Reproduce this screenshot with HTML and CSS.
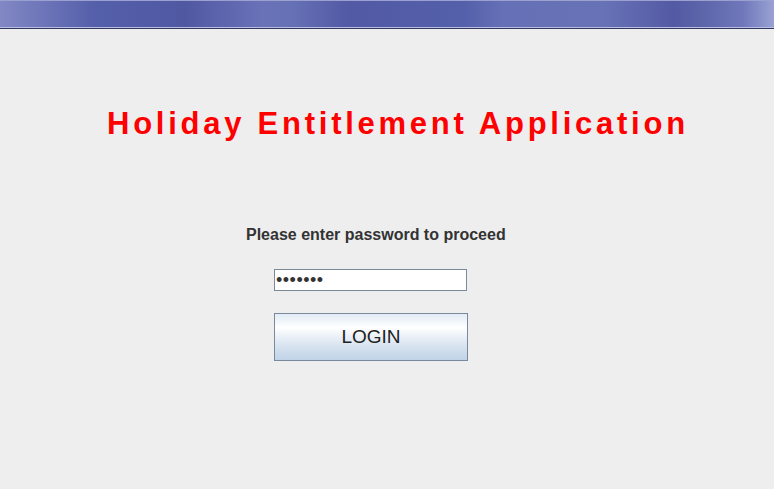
FILE: index.html
```html
<!DOCTYPE html>
<html>
<head>
<meta charset="utf-8">
<link rel="stylesheet" href="styles.css">
</head>
<body>
<div class="titlebar"></div>
<main class="content">
  <h1 class="title">Holiday Entitlement Application</h1>
  <p class="prompt">Please enter password to proceed</p>
  <div class="field"><input class="password" type="password" value="1234567"></div>
  <div class="actions"><button class="login">LOGIN</button></div>
</main>
</body>
</html>
```
FILE: styles.css
```css
html, body {
  margin: 0;
  padding: 0;
  background: #eeeeee;
  font-family: "Liberation Sans", Arial, sans-serif;
  width: 774px;
  height: 489px;
  overflow: hidden;
}
.titlebar {
  height: 26px;
  border-top: 1px solid #9aa0d0;
  border-bottom: 1px solid #b8bde6;
  box-shadow: 0 1px 0 #33385e;
  background: linear-gradient(90deg, #8288c4 0%, #6c74b8 6%, #5560aa 12%, #5058a2 24%, #5a63ab 28%, #6a73b8 34%, #6670b4 38%, #5259a5 45%, #5460aa 60%, #6670b6 65%, #6872b6 78%, #535aa4 87%, #5a62a8 90%, #7078bb 96%, #9aa2d4 100%);
}
.content {
  display: flex;
  flex-direction: column;
  padding-top: 78px;
}
.title {
  margin: 0 0 0 107px;
  font-size: 31px;
  font-weight: bold;
  color: #ff0000;
  letter-spacing: 3.75px;
  line-height: 36px;
  white-space: nowrap;
}
.prompt {
  margin: 83px 0 0 246px;
  font-size: 16px;
  font-weight: bold;
  color: #333333;
  line-height: 20px;
}
.field {
  margin: 24px 0 0 274px;
}
.password {
  box-sizing: border-box;
  width: 193px;
  height: 22px;
  border: 1px solid #7a8a99;
  background: #ffffff;
  padding: 0 1px;
  margin: 0;
  font-family: "Liberation Sans", Arial, sans-serif;
  font-size: 18px;
  color: #333333;
  letter-spacing: 0.5px;
  outline: none;
}
.actions {
  margin: 22px 0 0 274px;
}
.login {
  box-sizing: border-box;
  width: 194px;
  height: 48px;
  border: 1px solid #7a8a9e;
  border-radius: 0;
  background: linear-gradient(180deg, #e2ebf5 0%, #ffffff 30%, #eaf0f7 50%, #d3e0ee 75%, #c0d3e6 100%);
  font-family: "Liberation Sans", Arial, sans-serif;
  font-size: 19px;
  color: #222222;
  padding: 0;
  margin: 0;
}
```
